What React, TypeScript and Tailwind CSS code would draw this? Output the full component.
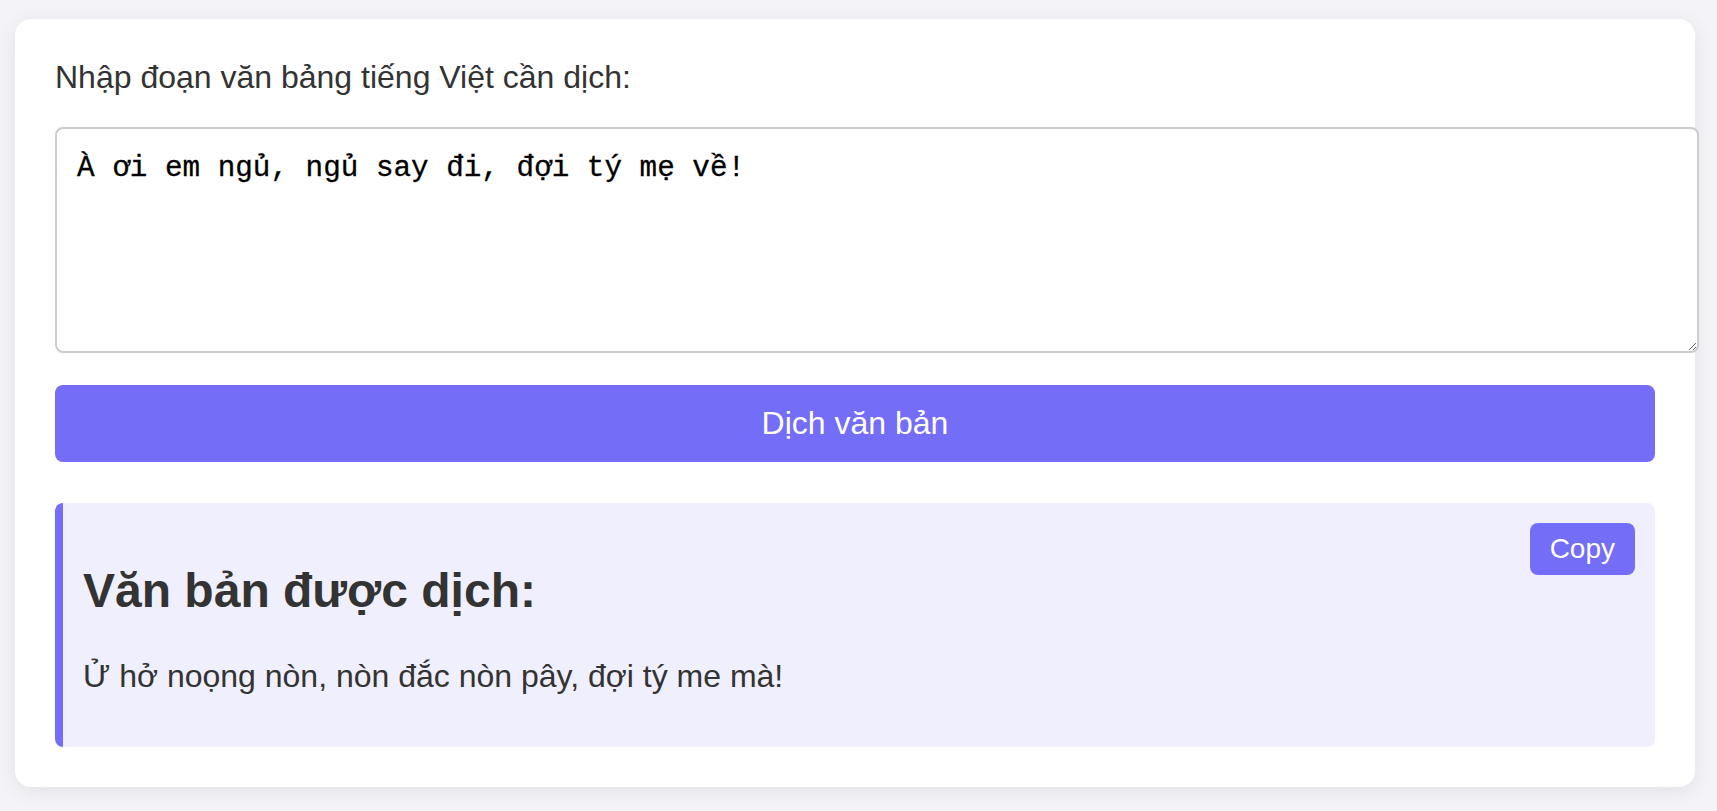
import React, { useState } from "react";

export default function App() {
    const [text, setText] = useState("À ơi em ngủ, ngủ say đi, đợi tý mẹ về!");
    const result = "Ử hở noọng nòn, nòn đắc nòn pây, đợi tý me mà!";

    return (
        <div className="min-h-screen bg-[#f3f3f8] pt-[19px] pb-[25px] font-['Liberation_Sans',Arial,sans-serif] text-[#333]">
            <div className="ml-[15px] w-[1680px] rounded-[16px] bg-white p-[40px] shadow-[0_4px_20px_rgba(0,0,0,0.08)]">
                <label htmlFor="source" className="block text-[32px] leading-[1.15] mb-[31px]">
                    Nhập đoạn văn bảng tiếng Việt cần dịch:
                </label>
                <textarea
                    id="source"
                    value={text}
                    onChange={(e) => setText(e.target.value)}
                    className="block box-content w-full h-[179px] px-[20px] pt-[23px] pb-[20px] border-2 border-[#ccc] rounded-[8px] bg-white text-black font-['Liberation_Mono',monospace] text-[29.3px] leading-[1.15] outline-none [-webkit-text-stroke:0.3px_black]"
                />
                <button className="block w-full mt-[32px] rounded-[8px] bg-[#736df7] py-[20px] text-[32px] leading-[1.15] text-white">
                    Dịch văn bản
                </button>
                <div className="relative mt-[41px] rounded-[8px] border-l-[8px] border-[#736df7] bg-[#f0effe] p-[20px]">
                    <button className="absolute top-[20px] right-[20px] rounded-[8px] bg-[#736df7] px-[20px] py-[10px] text-[28px] leading-[1.15] text-white">
                        Copy
                    </button>
                    <h2 className="my-[40px] text-[48px] font-bold leading-[1.15]">Văn bản được dịch:</h2>
                    <p className="my-[32px] text-[32px] leading-[1.15]">{result}</p>
                </div>
            </div>
        </div>
    );
}
